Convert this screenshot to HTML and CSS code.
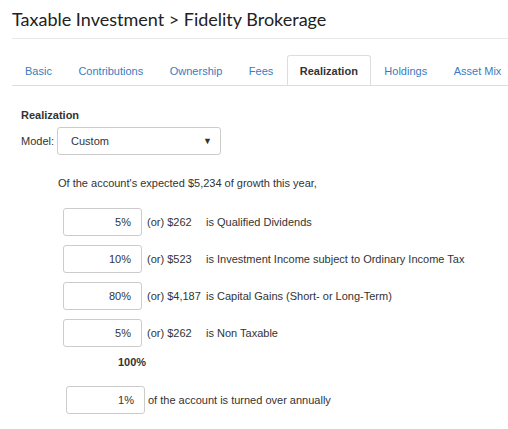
FILE: index.html
```html
<!DOCTYPE html>
<html>
<head>
<meta charset="utf-8">
<link rel="stylesheet" href="styles.css">
</head>
<body>
<div class="page">
  <h1 class="title">Taxable Investment &gt; Fidelity Brokerage</h1>
  <ul class="tabs">
    <li class="tab">Basic</li>
    <li class="tab">Contributions</li>
    <li class="tab">Ownership</li>
    <li class="tab">Fees</li>
    <li class="tab active">Realization</li>
    <li class="tab">Holdings</li>
    <li class="tab">Asset Mix</li>
  </ul>
  <div class="content">
    <div class="heading">Realization</div>
    <div class="model-row">
      <span class="model-label">Model:</span>
      <div class="select"><span>Custom</span><span class="arrow">&#9660;</span></div>
    </div>
    <p class="intro">Of the account's expected $5,234 of growth this year,</p>
    <div class="rows">
      <div class="row"><div class="input">5%</div><span class="amt">(or) $262</span><span class="desc">is Qualified Dividends</span></div>
      <div class="row"><div class="input">10%</div><span class="amt">(or) $523</span><span class="desc">is Investment Income subject to Ordinary Income Tax</span></div>
      <div class="row"><div class="input">80%</div><span class="amt">(or) $4,187</span><span class="desc">is Capital Gains (Short- or Long-Term)</span></div>
      <div class="row"><div class="input">5%</div><span class="amt">(or) $262</span><span class="desc">is Non Taxable</span></div>
    </div>
    <div class="total">100%</div>
    <div class="turnover"><div class="input">1%</div><span class="turn-text">of the account is turned over annually</span></div>
  </div>
</div>
</body>
</html>
```
FILE: styles.css
```css
html, body { margin: 0; padding: 0; background: #fff; }
body { font-family: "Liberation Sans", Arial, sans-serif; font-size: 11px; color: #333; overflow: hidden; }
.page { padding: 0 0 0 12px; overflow: hidden; }
.title {
  margin: 0;
  padding: 8px 0 7px 0;
  height: 23px;
  font-family: Lato, "Open Sans", sans-serif;
  font-weight: 400;
  font-size: 18px;
  line-height: 23px;
  color: #222;
  border-bottom: 1px solid #e8e8e8;
  white-space: nowrap;
}
.tabs {
  list-style: none;
  margin: 16px 0 0 0;
  padding: 0;
  display: flex;
  border-bottom: 1px solid #ddd;
  height: 30px;
  white-space: nowrap;
}
.tab {
  flex: none;
  padding: 0 12px 0 12px;
  margin-right: 0.5px;
  height: 29px;
  line-height: 29px;
  margin-top: 1px;
  color: #3a7bbf;
  border: 1px solid transparent;
  border-bottom: none;
  border-radius: 3px 3px 0 0;
}
.tab.active {
  color: #333;
  font-weight: bold;
  border-color: #ddd;
  margin-top: 0;
  height: 30px;
  line-height: 30px;
}
.content { padding: 22px 0 0 9px; }
.heading { font-weight: bold; line-height: 14px; height: 14px; }
.model-row { display: flex; align-items: center; margin-top: 5px; gap: 3px; }
.model-label { line-height: 28px; }
.select {
  box-sizing: border-box;
  width: 164px;
  height: 28px;
  border: 1px solid #ccc;
  border-radius: 3px;
  display: flex;
  align-items: center;
  justify-content: space-between;
  padding: 0 8px 0 13px;
}
.arrow { font-size: 9px; color: #333; }
.intro { margin: 22px 0 0 37px; line-height: 13px; }
.rows { display: flex; flex-direction: column; gap: 9px; margin: 18px 0 0 42px; }
.row { display: flex; align-items: center; }
.input {
  box-sizing: border-box;
  width: 79px;
  height: 28px;
  border: 1px solid #ccc;
  border-radius: 3px;
  text-align: right;
  padding-right: 10px;
  line-height: 26px;
}
.amt { width: 55px; margin-left: 5px; flex: none; }
.desc { margin-left: 4px; }
.total { font-weight: bold; margin: 9px 0 0 97px; line-height: 13px; }
.turnover { display: flex; align-items: center; margin: 17px 0 0 45px; }
.turn-text { margin-left: 3px; }
```
